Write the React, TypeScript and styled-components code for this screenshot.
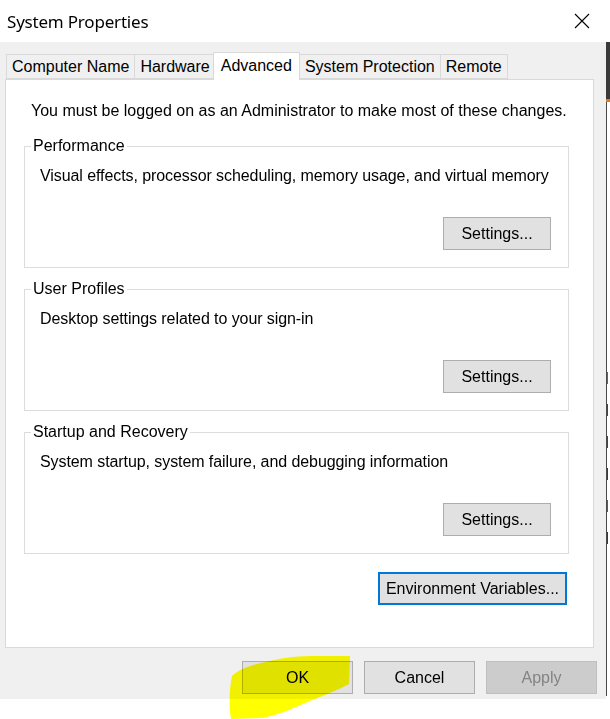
import React from "react";
import styled, { createGlobalStyle } from "styled-components";

const GlobalStyle = createGlobalStyle`
  html, body { margin: 0; padding: 0; background: #ffffff; }
  body { font-family: "Liberation Sans", Arial, sans-serif; color: #000; }
  * { box-sizing: border-box; }
`;

const Screen = styled.div`
  position: relative;
  display: flex;
  width: 610px;
  height: 719px;
  overflow: hidden;
  background: #ffffff;
`;

const Dialog = styled.div`
  width: 606px;
  display: flex;
  flex-direction: column;
`;

const TitleBar = styled.div`
  height: 42px;
  background: #ffffff;
  display: flex;
  align-items: center;
  justify-content: space-between;
  padding: 0 16px 0 7px;
`;

const Title = styled.div`
  font-family: "Noto Sans", "Open Sans", sans-serif;
  font-size: 17px;
  color: #000;
  letter-spacing: -0.2px;
`;

const Close = styled.div`
  width: 16px;
  height: 16px;
  display: flex;
`;

const Body = styled.div`
  background: #f0f0f0;
  padding: 10px 9px 5px 5px;
  display: flex;
  flex-direction: column;
`;

const TabList = styled.div`
  display: flex;
  align-items: flex-end;
  height: 27px;
  padding-left: 1px;
`;

const Tab = styled.div<{ $selected?: boolean }>`
  position: relative;
  height: ${(p) => (p.$selected ? "28px" : "25px")};
  margin: ${(p) => (p.$selected ? "0 -1px -1px -2px" : "0 -1px 0 0")};
  padding: ${(p) => (p.$selected ? "0 7px 2px" : "0 5px")};
  background: ${(p) => (p.$selected ? "#ffffff" : "#f0f0f0")};
  border: 1px solid #d9d9d9;
  border-bottom: ${(p) => (p.$selected ? "none" : "1px solid #d9d9d9")};
  z-index: ${(p) => (p.$selected ? 2 : 1)};
  font-size: 16px;
  line-height: ${(p) => (p.$selected ? "25px" : "23px")};
  white-space: nowrap;
`;

const TabPanel = styled.div`
  background: #ffffff;
  border: 1px solid #d9d9d9;
  margin-right: 3px;
  padding: 21px 24px 42px 18px;
  display: flex;
  flex-direction: column;
`;

const Notice = styled.div`
  font-size: 16px;
  line-height: 20px;
  padding-left: 7px;
  margin-bottom: 15px;
  white-space: nowrap;
`;

const GroupBox = styled.fieldset`
  margin: 0 0 11px 0;
  padding: 10px 17px 17px 6px;
  border: 1px solid #dcdcdc;
  min-width: 0;
`;

const Caption = styled.legend`
  font-size: 16px;
  line-height: 20px;
  padding: 0 2px;
  margin-left: 0;
`;

const Description = styled.div`
  font-size: 16px;
  line-height: 20px;
  padding-left: 9px;
  letter-spacing: -0.08px;
  white-space: nowrap;
`;

const ButtonRow = styled.div<{ $top?: number; $right?: number }>`
  display: flex;
  justify-content: flex-end;
  margin-top: ${(p) => p.$top ?? 0}px;
  padding-right: ${(p) => p.$right ?? 0}px;
`;

const Button = styled.button<{ $w: number; $focused?: boolean }>`
  width: ${(p) => p.$w}px;
  height: 33px;
  font-family: "Liberation Sans", Arial, sans-serif;
  font-size: 16px;
  color: #000;
  background: #e1e1e1;
  border: ${(p) => (p.$focused ? "2px solid #0078d7" : "1px solid #adadad")};
  border-radius: 0;
  padding: 0;
  margin: 0;
  &:disabled {
    background: #cccccc;
    border-color: #bfbfbf;
    color: #838383;
  }
`;

const Footer = styled.div`
  display: flex;
  justify-content: flex-end;
  gap: 11px;
  margin-top: 13px;
`;

const Strip = styled.div`
  width: 4px;
  display: flex;
  flex-direction: column;
`;

const StripTop = styled.div`
  height: 42px;
  background: #ffffff;
`;

const StripDark = styled.div`
  height: 60px;
  background: #3a3a3a;
  border-bottom: 3px solid #e07a20;
`;

const StripBody = styled.div`
  height: 594px;
  background: #ffffff;
  border-left: 1px solid #4a4a4a;
  display: flex;
  flex-direction: column;
  padding-top: 270px;
  gap: 20px;
`;

const Mark = styled.div<{ $c: string }>`
  height: 12px;
  width: 3px;
  border-left: 1px solid ${(p) => p.$c};
`;

const Highlight = styled.svg`
  position: absolute;
  left: 0;
  top: 0;
  width: 610px;
  height: 719px;
  pointer-events: none;
  mix-blend-mode: multiply;
`;

export default function App() {
  return (
    <>
      <GlobalStyle />
      <Screen>
        <Dialog>
          <TitleBar>
            <Title>System Properties</Title>
            <Close>
              <svg width="16" height="16" viewBox="0 0 16 16">
                <path d="M1 1 L15 15 M15 1 L1 15" stroke="#000" strokeWidth="1.1" fill="none" />
              </svg>
            </Close>
          </TitleBar>
          <Body>
            <TabList>
              <Tab>Computer Name</Tab>
              <Tab>Hardware</Tab>
              <Tab $selected>Advanced</Tab>
              <Tab>System Protection</Tab>
              <Tab>Remote</Tab>
            </TabList>
            <TabPanel>
              <Notice>You must be logged on as an Administrator to make most of these changes.</Notice>
              <GroupBox>
                <Caption>Performance</Caption>
                <Description>Visual effects, processor scheduling, memory usage, and virtual memory</Description>
                <ButtonRow $top={31}>
                  <Button $w={108}>Settings...</Button>
                </ButtonRow>
              </GroupBox>
              <GroupBox>
                <Caption>User Profiles</Caption>
                <Description>Desktop settings related to your sign-in</Description>
                <ButtonRow $top={31}>
                  <Button $w={108}>Settings...</Button>
                </ButtonRow>
              </GroupBox>
              <GroupBox>
                <Caption>Startup and Recovery</Caption>
                <Description>System startup, system failure, and debugging information</Description>
                <ButtonRow $top={31}>
                  <Button $w={108}>Settings...</Button>
                </ButtonRow>
              </GroupBox>
              <ButtonRow $top={7} $right={2}>
                <Button $w={189} $focused>
                  Environment Variables...
                </Button>
              </ButtonRow>
            </TabPanel>
            <Footer>
              <Button $w={111}>OK</Button>
              <Button $w={111}>Cancel</Button>
              <Button $w={111} disabled>
                Apply
              </Button>
            </Footer>
          </Body>
        </Dialog>
        <Strip>
          <StripTop />
          <StripDark />
          <StripBody>
            <Mark $c="#8a5a2a" />
            <Mark $c="#6a3a1a" />
            <Mark $c="#2a4a7a" />
            <Mark $c="#3a3a3a" />
            <Mark $c="#5a5a5a" />
            <Mark $c="#3a3a3a" />
          </StripBody>
        </Strip>
        <Highlight viewBox="0 0 610 719">
          <path
            d="M232 676 C240 668 255 664 270 661 C285 657 300 656 318 656 L350 656 L349 684 C338 690 320 697 305 703 C292 709 278 715 262 718 L231 719 C229 708 229 690 232 676 Z"
            fill="#ffff00"
          />
        </Highlight>
      </Screen>
    </>
  );
}
